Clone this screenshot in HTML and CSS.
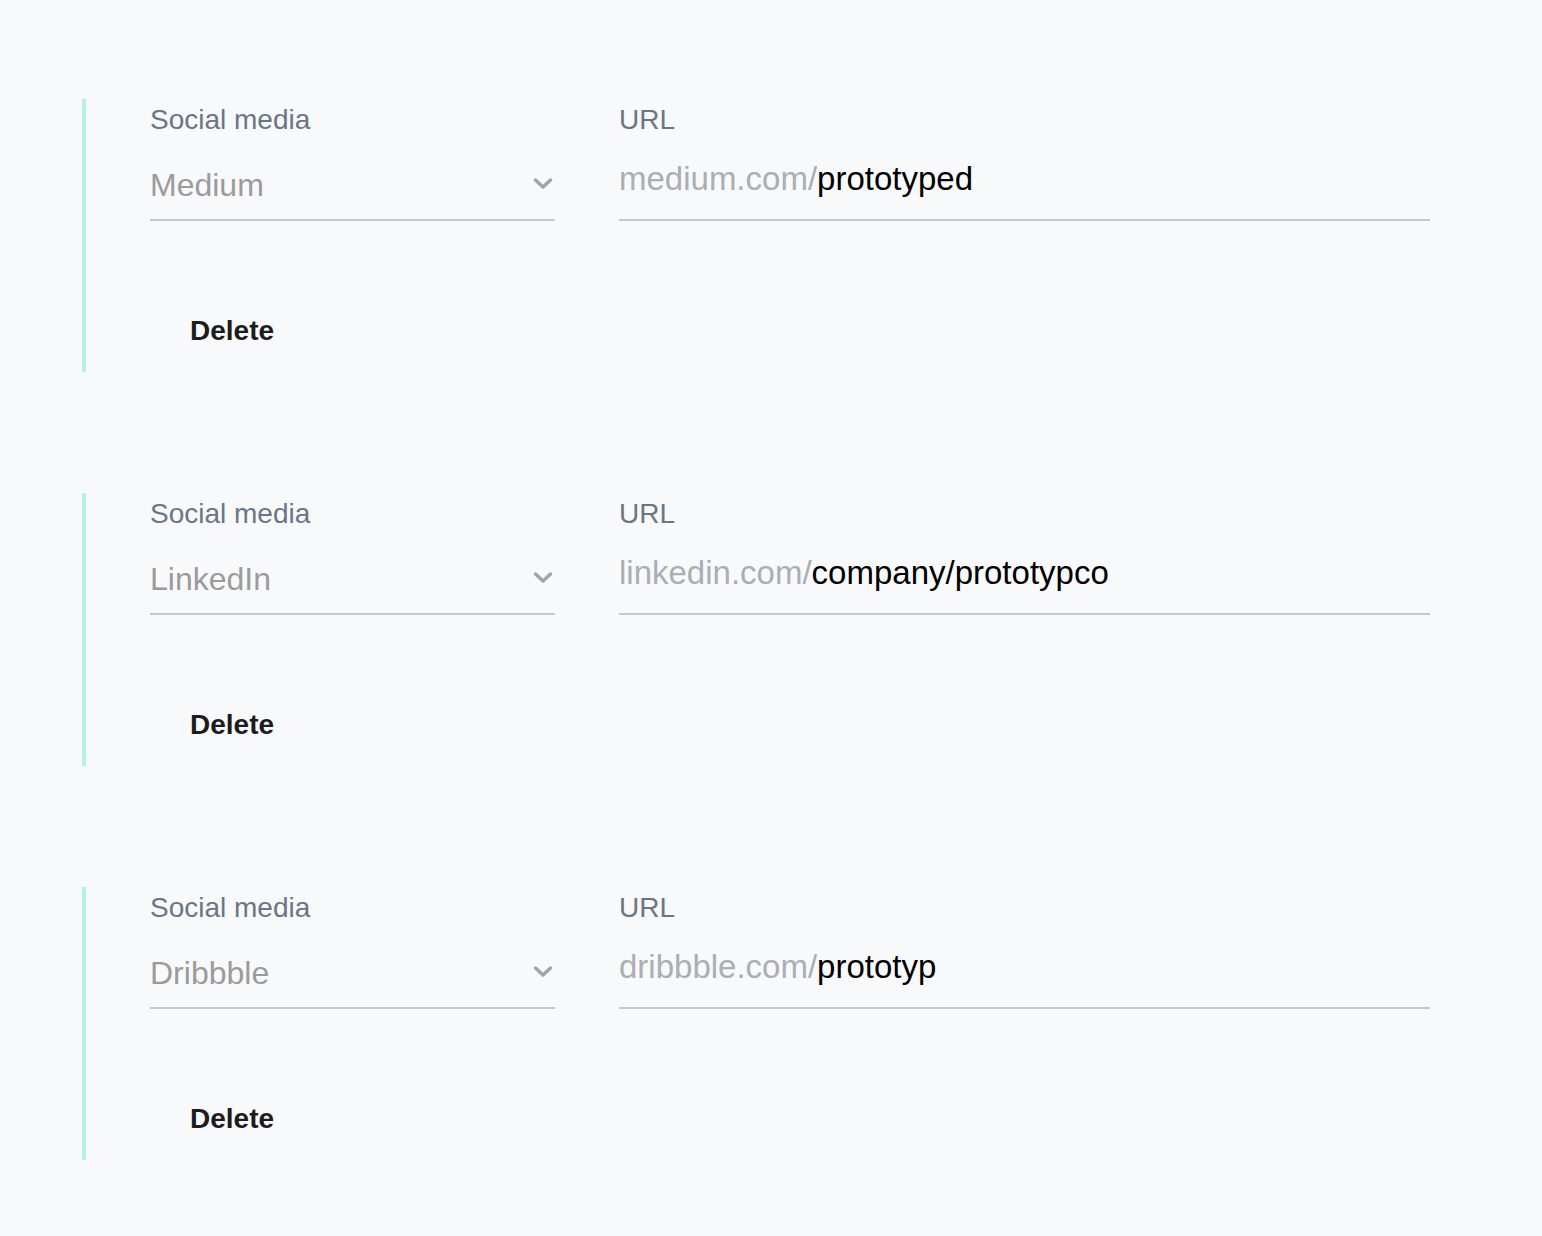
FILE: index.html
```html
<html>
<head>
    <title>Social media</title>
    <link rel="stylesheet" href="styles.css">
</head>
<body>
    <div class="container">
        <div class="entry">
            <div class="row">
                <div class="field select-field">
                    <label class="label">Social media</label>
                    <div class="control select">
                        <span class="value">Medium</span>
                        <svg class="chevron" width="20" height="13" viewBox="0 0 20 13"><path d="M2.5 3 L10 10 L17.5 3" fill="none" stroke="#a0a5aa" stroke-width="3.5" stroke-linecap="round" stroke-linejoin="round"/></svg>
                    </div>
                </div>
                <div class="field url-field">
                    <label class="label">URL</label>
                    <div class="control url"><span class="prefix">medium.com/</span>prototyped</div>
                </div>
            </div>
            <button class="delete">Delete</button>
        </div>

        <div class="entry">
            <div class="row">
                <div class="field select-field">
                    <label class="label">Social media</label>
                    <div class="control select">
                        <span class="value">LinkedIn</span>
                        <svg class="chevron" width="20" height="13" viewBox="0 0 20 13"><path d="M2.5 3 L10 10 L17.5 3" fill="none" stroke="#a0a5aa" stroke-width="3.5" stroke-linecap="round" stroke-linejoin="round"/></svg>
                    </div>
                </div>
                <div class="field url-field">
                    <label class="label">URL</label>
                    <div class="control url"><span class="prefix">linkedin.com/</span>company/prototypco</div>
                </div>
            </div>
            <button class="delete">Delete</button>
        </div>

        <div class="entry">
            <div class="row">
                <div class="field select-field">
                    <label class="label">Social media</label>
                    <div class="control select">
                        <span class="value">Dribbble</span>
                        <svg class="chevron" width="20" height="13" viewBox="0 0 20 13"><path d="M2.5 3 L10 10 L17.5 3" fill="none" stroke="#a0a5aa" stroke-width="3.5" stroke-linecap="round" stroke-linejoin="round"/></svg>
                    </div>
                </div>
                <div class="field url-field">
                    <label class="label">URL</label>
                    <div class="control url"><span class="prefix">dribbble.com/</span>prototyp</div>
                </div>
            </div>
            <button class="delete">Delete</button>
        </div>
    </div>
</body>
</html>
```

FILE: styles.css
```css
body {
    margin: 0;
    background: #f8f9fb;
    font-family: "Liberation Sans", Arial, sans-serif;
}
.container {
    padding: 99px 112px 76px 82px;
    display: flex;
    flex-direction: column;
    gap: 121px;
}
.entry {
    border-left: 4px solid #b4f1e7;
    padding-left: 64px;
    padding-bottom: 21px;
}
.row {
    display: flex;
    gap: 65px;
}
.field {
    display: flex;
    flex-direction: column;
}
.select-field {
    width: 405px;
}
.url-field {
    flex: 1;
    margin-left: -1px;
}
.label {
    padding-top: 1px;
    font-size: 28px;
    line-height: 40px;
    color: #6b7684;
}
.control {
    border-bottom: 2px solid #c3c8cd;
    line-height: 40px;
}
.select {
    margin-top: 25px;
    padding-bottom: 14px;
    display: flex;
    align-items: center;
    justify-content: space-between;
    font-size: 32px;
    color: #9b9b9b;
}
.chevron {
    margin-right: 2px;
    margin-top: -3px;
}
.url {
    margin-top: 19px;
    padding-bottom: 20px;
    font-size: 33px;
    color: #000;
}
.prefix {
    color: #a9afb5;
}
.delete {
    display: block;
    margin-top: 90px;
    padding: 0 40px;
    border: none;
    background: none;
    font-family: "Liberation Sans", Arial, sans-serif;
    font-size: 28px;
    font-weight: bold;
    line-height: 40px;
    color: #1c1c1e;
    cursor: pointer;
}
```
